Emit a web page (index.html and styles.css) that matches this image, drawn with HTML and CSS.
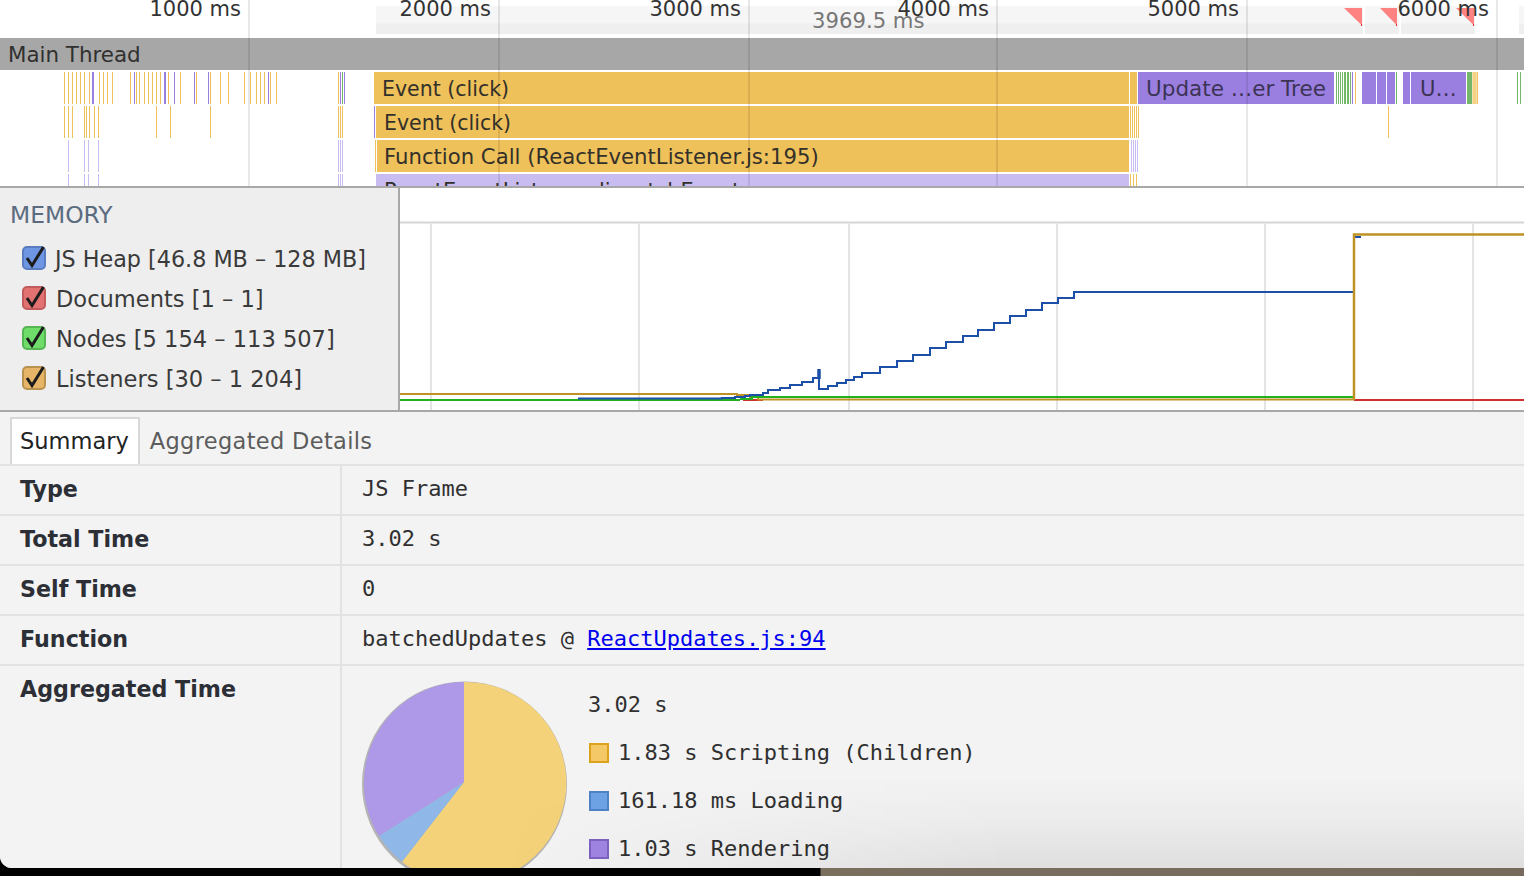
FILE: index.html
```html
<!DOCTYPE html>
<html lang="en">
<head>
<meta charset="utf-8">
<title>Timeline</title>
<link rel="stylesheet" href="styles.css">
</head>
<body>
<div class="window">
  <section class="timeline">
    <div class="ruler">
      <div class="strip strip-a"></div>
      <div class="strip strip-b"></div>
      <div class="strip strip-c"></div>
      <div class="strip strip-d"></div>
      <svg class="warn" width="1524" height="38" viewBox="0 0 1524 38">
        <path d="M1344 8H1362V25.500Z M1380 8H1397V25.500Z M1456 8H1474V25.500Z" fill="#ff8282"/>
        <path d="M1361 24h1v2h-1z M1396 24h1v2h-1z M1473 24h1v2h-1z" fill="#e03030"/>
      </svg>
      <span class="tick t1">1000 ms</span>
      <span class="tick t2">2000 ms</span>
      <span class="tick t3">3000 ms</span>
      <span class="tick t4">4000 ms</span>
      <span class="tick t5">5000 ms</span>
      <span class="tick t6">6000 ms</span>
      <span class="cursor-time">3969.5 ms</span>
    </div>
    <div class="thread">Main Thread</div>
    <div class="flame">
      <svg class="ticks" width="1524" height="116" viewBox="0 70 1524 116">
        <g fill="none" stroke-width="1">
          <path stroke="#efc15a" d="M64.500 72V104M68.500 72V104M72.500 72V104M76.500 72V104M80.500 72V104M84.500 72V104M89.500 72V104M99.500 72V104M103.500 72V104M107.500 72V104M112.500 72V104M130.500 72V104M136.500 72V104M139.500 72V104M144.500 72V104M148.500 72V104M152.500 72V104M156.500 72V104M160.500 72V104M168.500 72V104M174.500 72V104M180.500 72V104M196.500 72V104M210.500 72V104M220.500 72V104M228.500 72V104M244.500 72V104M250.500 72V104M256.500 72V104M260.500 72V104M264.500 72V104M270.500 72V104M276.500 72V104M338.500 72V104M1355.500 72V104M1473 72V104M1474 72V104M1475 72V104M1476 72V104M1477.500 72V104"/>
          <path stroke="#9a7fe0" d="M92.500 72V104M93.500 72V104M134.500 72V104M164.500 72V104M165.500 72V104M174.500 72V104M194.500 72V104M208.500 72V104M268.500 72V104M340.500 72V104M344.500 72V104M1352.500 72V104"/>
          <path stroke="#74b76a" d="M342.500 72V104M1336.500 72V104M1338.500 72V104M1340.500 72V104M1342.500 72V104M1344.500 72V104M1345.500 72V104M1347.500 72V104M1348.500 72V104M1350.500 72V104M1396.500 72V104M1517.500 72V104M1520.500 72V104"/>
          <path stroke="#efc15a" d="M64.500 106V138M68.500 106V138M72.500 106V138M84.500 106V138M86.500 106V138M89.500 106V138M94.500 106V138M98.500 106V138M156.500 106V138M170.500 106V138M210.500 106V138M338.500 106V138M340.500 106V138M342.500 106V138M1130.500 106V138M1132.500 106V138M1134.500 106V138M1136.500 106V138M1138.500 106V138M1388.500 106V138"/>
          <path stroke="#9a7fe0" d="M374.500 106V138"/>
          <path stroke="#efc15a" d="M375.500 140V172"/>
          <path stroke="#c8bcf0" d="M68.500 140V172M84.500 140V172M88.500 140V172M98.500 140V172M338.500 140V172M340.500 140V172M342.500 140V172M1131.500 140V172M1133.500 140V172M1135.500 140V172M1137.500 140V172"/>
          <path stroke="#c8bcf0" d="M68.500 174V186M84.500 174V186M88.500 174V186M98.500 174V186M338.500 174V186M340.500 174V186M342.500 174V186"/>
          <path stroke="#efc15a" d="M1130.500 174V186M1133.500 174V186M1136.500 174V186"/>
        </g>
      </svg>
      <div class="bar js row1 b-event1 narrow">Event (click)</div>
      <div class="bar js row1 b-event1b"></div>
      <div class="bar render row1 b-update">Update …er Tree</div>
      <div class="bar render row1 b-p1"></div>
      <div class="bar render row1 b-p2"></div>
      <div class="bar render row1 b-p3"></div>
      <div class="bar render row1 b-p4"></div>
      <div class="bar render row1 b-u">U…</div>
      <div class="bar paint row1 b-g"></div>
      <div class="bar js row2 b-event2 narrow">Event (click)</div>
      <div class="bar js row3 b-fn">Function Call (ReactEventListener.js:195)</div>
      <div class="bar soft row4 b-react">ReactEventListener.dispatchEvent</div>
    </div>
    <div class="gridlines"><i></i><i></i><i></i><i></i><i></i><i></i></div>
  </section>

  <section class="memory">
    <aside class="legend">
      <h2 class="legend-title">MEMORY</h2>
      <div class="check-row"><span class="box box-blue"><svg viewBox="0 0 20 20"><path d="M3 10L8 17.500L19.500 -1"/></svg></span><span class="check-label heap">JS Heap [46.8 MB – 128 MB]</span></div>
      <div class="check-row"><span class="box box-red"><svg viewBox="0 0 20 20"><path d="M3 10L8 17.500L19.500 -1"/></svg></span><span class="check-label">Documents [1 – 1]</span></div>
      <div class="check-row"><span class="box box-green"><svg viewBox="0 0 20 20"><path d="M3 10L8 17.500L19.500 -1"/></svg></span><span class="check-label">Nodes [5 154 – 113 507]</span></div>
      <div class="check-row"><span class="box box-orange"><svg viewBox="0 0 20 20"><path d="M3 10L8 17.500L19.500 -1"/></svg></span><span class="check-label">Listeners [30 – 1 204]</span></div>
    </aside>
    <div class="chart">
      <svg width="1124" height="222" viewBox="400 188 1124 222">
        <path d="M400 222.500H1524" stroke="#d6d6d6" stroke-width="2" fill="none"/>
        <path d="M431 223V410M639 223V410M849 223V410M1057 223V410M1265 223V410M1473 223V410" stroke="#e4e4e4" stroke-width="2" fill="none"/>
        <path d="M400 400H740" stroke="#22b020" stroke-width="2" fill="none"/>
        <path d="M743 400H763" stroke="#d03030" stroke-width="2" fill="none"/>
        <path d="M1354 400H1524" stroke="#d03030" stroke-width="2" fill="none"/>
        <path d="M400 394H737V395H750V397H758V399.500H1354" stroke="#bf9225" stroke-width="2" fill="none"/>
        <path d="M740 399H752V397H1354" stroke="#22b020" stroke-width="2" fill="none"/>
        <path d="M578 398.500H722V398H735V397H745V396H750V395H763V393H768V390H780V388H790V385H802V382H813V378H819V369M819 369V389H828V386H837V383H846V380H854V377H862V373H880V367H897V361H913V355H930V348H946V342H963V336H978V330H994V323H1010V316H1026V310H1042V303H1058V298H1074V292H1354M1355 237H1361" stroke="#1c50a8" stroke-width="2" fill="none"/>
        <path d="M819 369V379" stroke="#1c50a8" stroke-width="3.500" fill="none"/>
        <path d="M1354 400V234.500H1524" stroke="#bf9225" stroke-width="2.500" fill="none"/>
      </svg>
    </div>
  </section>

  <section class="details">
    <div class="tabs">
      <div class="tab active">Summary</div>
      <div class="tab wide">Aggregated Details</div>
    </div>
    <div class="row"><div class="key">Type</div><div class="val">JS Frame</div></div>
    <div class="row"><div class="key">Total Time</div><div class="val">3.02 s</div></div>
    <div class="row"><div class="key">Self Time</div><div class="val">0</div></div>
    <div class="row"><div class="key">Function</div><div class="val">batchedUpdates @ <a class="src" href="#">ReactUpdates.js:94</a></div></div>
    <div class="row row-agg">
      <div class="key">Aggregated Time</div>
      <div class="val val-agg">
        <svg class="pie" width="206" height="206" viewBox="361 680 206 206">
          <circle cx="464.500" cy="784" r="102.500" fill="#b4b4b4"/>
          <path d="M464 782L464 682A101 101 0 1 1 402 861.700Z" fill="#f4d27a"/>
          <path d="M464 782L402 861.700A101 101 0 0 1 379 836Z" fill="#8fb8e8"/>
          <path d="M464 782L379 836A101 101 0 0 1 464 682Z" fill="#ae98e8"/>
        </svg>
        <div class="pie-legend">
          <div class="pl-row">3.02 s</div>
          <div class="pl-row"><span class="sw sw-y"></span>1.83 s Scripting (Children)</div>
          <div class="pl-row"><span class="sw sw-b"></span>161.18 ms Loading</div>
          <div class="pl-row"><span class="sw sw-p"></span>1.03 s Rendering</div>
        </div>
      </div>
    </div>
  </section>
  <div class="edge-shade"></div>
</div>
</body>
</html>
```
FILE: styles.css
```css
* { box-sizing: border-box; }
html, body { margin: 0; height: 100%; overflow: hidden; }
body {
  background: linear-gradient(90deg, #000 0, #000 820px, #7a6f5f 821px, #756a5b 100%);
  font-family: "DejaVu Sans", sans-serif;
  color: #303030;
}
.window {
  position: relative;
  width: 1524px;
  height: 868px;
  overflow: hidden;
  background: #f3f3f3;
  border-radius: 0 0 0 12px;
}
.edge-shade {
  position: absolute;
  left: 500px;
  right: 0;
  bottom: 0;
  height: 90px;
  pointer-events: none;
  background: linear-gradient(rgba(0, 0, 0, 0) 0, rgba(0, 0, 0, 0.03) 50%, rgba(0, 0, 0, 0.08) 100%);
  -webkit-mask-image: linear-gradient(90deg, transparent 0, #000 50%);
  mask-image: linear-gradient(90deg, transparent 0, #000 50%);
}

/* timeline */
.timeline { position: relative; height: 186px; background: #fff; }
.ruler { position: relative; height: 38px; overflow: hidden; }
.strip { position: absolute; top: 6px; height: 28px; background: linear-gradient(#f6f6f6 0, #f6f6f6 17px, #efefef 18px, #efefef 100%); }
.strip-a { left: 376px; width: 987px; }
.strip-b { left: 1365px; width: 34px; }
.strip-c { left: 1401px; width: 74px; }
.strip-d { left: 1519px; width: 5px; }
.warn { position: absolute; left: 0; top: 0; }
.tick { position: absolute; top: -4px; font-size: 21px; line-height: 26px; color: #333; white-space: nowrap; }
.t1 { right: 1283px; }
.t2 { right: 1033px; }
.t3 { right: 783px; }
.t4 { right: 535px; }
.t5 { right: 285px; }
.t6 { right: 35px; }
.cursor-time { position: absolute; left: 812px; top: 8px; font-size: 21.200px; line-height: 26px; color: #777; white-space: nowrap; }
.thread { height: 32px; background: #a7a7a7; padding-left: 8px; font-size: 21.400px; line-height: 34px; color: #303030; }
.flame { position: relative; height: 116px; overflow: hidden; }
.ticks { position: absolute; left: 0; top: 0; }
.bar { position: absolute; height: 32px; font-size: 21.200px; line-height: 34px; padding-left: 8px; white-space: nowrap; overflow: hidden; color: #33302a; }
.narrow { font-size: 20.500px; }
.js { background: #efc15a; }
.render { background: #9a7fe0; color: #3c3355; }
.paint { background: #74b76a; }
.soft { background: #c8bcf0; }
.row1 { top: 2px; }
.row2 { top: 36px; }
.row3 { top: 70px; }
.row4 { top: 104px; }
.b-event1 { left: 374px; width: 755px; }
.b-event1b { left: 1130px; width: 7px; padding: 0; }
.b-update { left: 1138px; width: 196px; font-size: 21.500px; }
.b-p1 { left: 1362px; width: 14px; padding: 0; }
.b-p2 { left: 1377px; width: 9px; padding: 0; }
.b-p3 { left: 1387px; width: 8px; padding: 0; }
.b-p4 { left: 1403px; width: 7px; padding: 0; }
.b-u { left: 1411px; width: 55px; padding-left: 9px; }
.b-g { left: 1467px; width: 5px; padding: 0; }
.b-event2 { left: 376px; width: 753px; }
.b-fn { left: 377px; width: 752px; padding-left: 7px; }
.b-react { left: 376px; width: 753px; font-size: 20.900px; }
.gridlines { position: absolute; inset: 0; pointer-events: none; }
.gridlines i { position: absolute; top: 0; bottom: 0; width: 2px; background: rgba(0, 0, 0, 0.09); }
.gridlines i:nth-child(1) { left: 248px; }
.gridlines i:nth-child(2) { left: 498px; }
.gridlines i:nth-child(3) { left: 748px; }
.gridlines i:nth-child(4) { left: 996px; }
.gridlines i:nth-child(5) { left: 1246px; }
.gridlines i:nth-child(6) { left: 1496px; }

/* memory */
.memory { display: flex; height: 226px; border-top: 2px solid #a8a8a8; border-bottom: 2px solid #a8a8a8; background: #fff; }
.legend { width: 400px; flex: none; background: #eee; border-right: 2px solid #a8a8a8; padding: 12px 0 0 10px; }
.legend-title { margin: 0 0 8px; font-size: 23.400px; line-height: 30px; font-weight: 400; color: #5a6b80; }
.check-row { display: flex; align-items: center; height: 40px; padding-left: 12px; }
.box { width: 24px; height: 24px; flex: none; border-radius: 5px; border: 2px solid; margin-right: 10px; }
.box svg { display: block; width: 20px; height: 20px; fill: none; stroke: #1c1c1c; stroke-width: 3; overflow: visible; }
.box-blue { background: #6f96e3; border-color: #5a7cc0; }
.box-red { background: #e27272; border-color: #c25c5c; }
.box-green { background: #6fdc6a; border-color: #55b552; }
.box-orange { background: #e6b567; border-color: #b89350; }
.check-label { margin-top: 2px; font-size: 22.550px; line-height: 30px; white-space: nowrap; color: #3a3a3a; }
.heap { margin-left: -1px; font-size: 22.280px; }
.chart { flex: 1; overflow: hidden; }
.chart svg { display: block; }

/* details */
.details { background: #f3f3f3; }
.tabs { display: flex; height: 54px; padding: 5px 0 0 10px; border-bottom: 2px solid #e2e2e2; }
.tab { font-size: 22.500px; line-height: 48px; padding: 0 10px; color: #5c5c5c; }
.tab.wide { letter-spacing: 0.33px; }
.tab.active { background: #fff; border: 2px solid #d8d8d8; border-bottom: 0; padding: 0 9px 0 8px; line-height: 44px; color: #222; }
.row { display: flex; height: 50px; border-bottom: 2px solid #e2e2e2; }
.key { width: 342px; flex: none; padding-left: 20px; border-right: 2px solid #e2e2e2; font-size: 22.200px; font-weight: 700; line-height: 46px; color: #2c2f36; }
.val { padding-left: 20px; font-family: "DejaVu Sans Mono", monospace; font-size: 22px; line-height: 46px; color: #303030; white-space: pre; }
.src { color: #0000ee; text-decoration: underline; }
.row-agg { height: 202px; border-bottom: 0; overflow: hidden; }
.val-agg { display: flex; padding: 14px 0 0 19px; line-height: 1; white-space: normal; }
.pie { flex: none; display: block; }
.pie-legend { margin: 1px 0 0 21px; }
.pl-row { display: flex; align-items: center; height: 48px; line-height: 48px; white-space: pre; }
.sw { width: 20px; height: 20px; border: 2px solid; margin: 0 9px 0 1px; flex: none; }
.sw-y { background: #f4c866; border-color: #dca21c; }
.sw-b { background: #6ea3e6; border-color: #4f83c6; }
.sw-p { background: #a085e4; border-color: #7d62c0; }
```
